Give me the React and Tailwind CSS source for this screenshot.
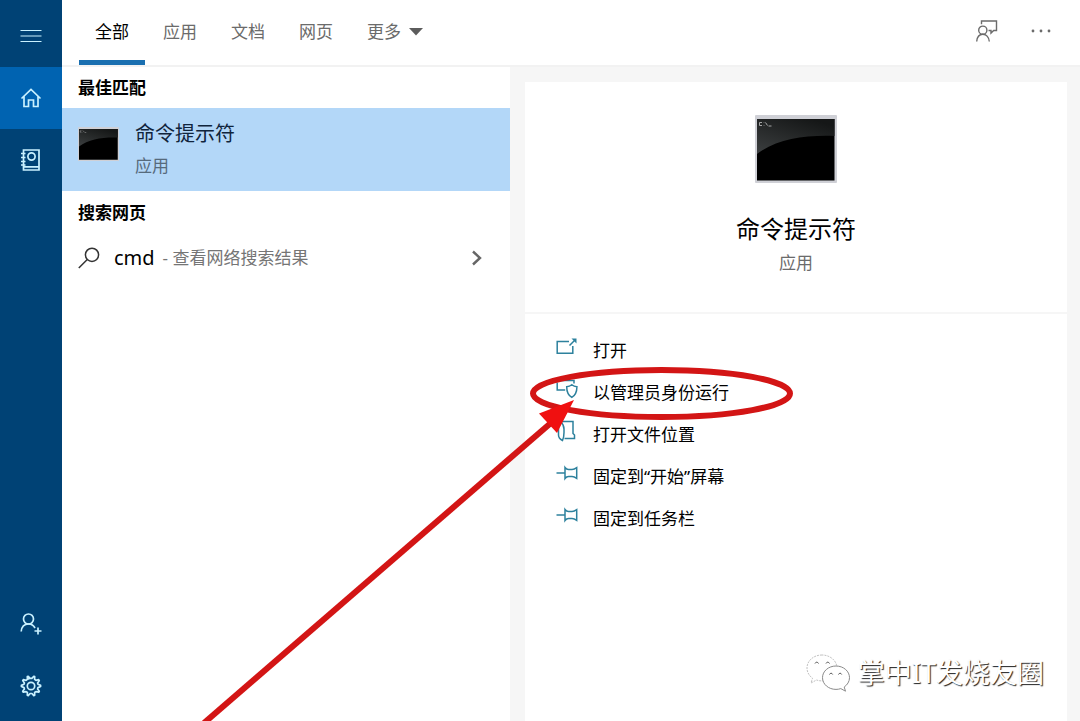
import React from 'react';

const tabs = ['全部', '应用', '文档', '网页'];

const MenuIcon = () => (
  <svg width="22" height="22" viewBox="0 0 22 22" fill="none" stroke="currentColor" strokeWidth="1.2">
    <path d="M0.5 5.500h21M0.5 11h21M0.5 16.500h21" />
  </svg>
);

const HomeIcon = () => (
  <svg width="22" height="22" viewBox="0 0 22 22" fill="none" stroke="currentColor" strokeWidth="1.7">
    <path d="M1.5 11.5 11 2.5l9.5 9M4 9.5v10h4.5v-6.5h5v6.5H18v-10" />
  </svg>
);

const NotebookIcon = () => (
  <svg width="22" height="24" viewBox="0 0 22 24" fill="none" stroke="currentColor" strokeWidth="1.7">
    <path d="M3.500 2h15.500v20H3.500zM3.500 18.800h15.500" />
    <path d="M1 5.500h4.500M1 9.500h4.500M1 13.500h4.500M1 17h4.500" strokeWidth="1.4" />
    <circle cx="11.500" cy="8.500" r="3.600" />
  </svg>
);

const AddUserIcon = () => (
  <svg width="22" height="24" viewBox="0 0 22 24" fill="none" stroke="currentColor" strokeWidth="1.7">
    <circle cx="8.5" cy="7" r="5" />
    <path d="M1.200 19.500c.4-4.500 3.200-7.500 7.300-7.500 2.900 0 5.200 1.500 6.500 4M18 15.500v7M14.500 19h7" />
  </svg>
);

const GearIcon = () => (
  <svg width="24" height="24" viewBox="0 0 24 24" fill="none" stroke="currentColor" strokeWidth="1.7" strokeLinejoin="round">
    <path d="M9.700 4.800 9.200 2.300 11.100 4.400h1.800l1.900-2.100.9 0.300-.1 2.800 1.300.9 2.800-.6.600.9-1.700 2.300.4 1.400 2.600 1.100v1.100l-2.600 1.100-.4 1.400 1.700 2.300-.6.900-2.800-.6-1.300.9.100 2.800-.9.300-1.900-2.100h-1.800l-1.900 2.100-.9-.3.100-2.800-1.300-.9-2.800.6-.6-.9 1.700-2.300-.4-1.400-2.600-1.100v-1.100l2.600-1.100.4-1.400-1.700-2.300.6-.9 2.800.6 1.300-.9-.1-2.800.9-.3z" />
    <circle cx="12" cy="12" r="3.700" />
  </svg>
);

const FeedbackIcon = () => (
  <svg width="22" height="22" viewBox="0 0 22 22" fill="none" stroke="currentColor" strokeWidth="1.400">
    <path d="M5.500 4.200V1h15v9.500h-2.800l-2.700 2.600v-2.600h-2.500" />
    <circle cx="6.800" cy="10.200" r="4.100" />
    <path d="M.7 21.500c.4-4.400 2.800-7.200 6.100-7.200s6.100 2.800 6.500 7.200" />
  </svg>
);

const SearchIcon = () => (
  <svg width="22" height="22" viewBox="0 0 22 22" fill="none" stroke="#333" strokeWidth="1.5">
    <circle cx="14" cy="7.8" r="6.6" />
    <path d="M9.300 12.500.8 21" />
  </svg>
);

const ConsoleIcon = ({ className, id }) => (
  <svg className={className} viewBox="0 0 82 68" preserveAspectRatio="none">
    <defs>
      <linearGradient id={id} x1="0" y1="1" x2="0.7" y2="0">
        <stop offset="0" stopColor="#3c3f40" />
        <stop offset="1" stopColor="#151717" />
      </linearGradient>
    </defs>
    <rect width="82" height="68" rx="1" fill="#cfd0d6" />
    <rect x="2" y="4" width="77.500" height="61.500" fill="#000" />
    <path d="M2 4h77.500v17C49 20 22 24 2 39z" fill={`url(#${id})`} />
    <path d="M7 7.500H4.500v3H7M9 7.500v.5M9 10v.5M10.500 7.500l2 3M13.500 11h3" stroke="#b5b5b5" strokeWidth="0.9" fill="none" />
  </svg>
);

const OpenIcon = () => (
  <svg width="22" height="22" viewBox="0 0 22 22" fill="none" stroke="currentColor" strokeWidth="1.5">
    <path d="M13 5.500H1.200v11.800h15.600V10M13.500 9.500l5.500-5.500" />
    <path d="M15.500 2.500h5v5z" fill="currentColor" stroke="none" />
  </svg>
);

const AdminIcon = () => (
  <svg width="22" height="22" viewBox="0 0 22 22" fill="none" stroke="currentColor" strokeWidth="1.5">
    <path d="M3.500 2.500H18v3M1.200 4.500V12h8" />
    <path d="M15.800 6.800c-1.500 1.300-3.300 1.900-5.100 1.900 0 5 1 8.300 5.100 10.700 4.100-2.400 5.100-5.700 5.100-10.700-1.800 0-3.600-.6-5.100-1.900z" />
  </svg>
);

const FileLocationIcon = () => (
  <svg width="22" height="22" viewBox="0 0 22 22" fill="none" stroke="currentColor" strokeWidth="1.5">
    <path d="M4.500 1.500h12.500v12l1.500 1.500v3.500H8.500" />
    <path d="M4.500 1.500C3 3 2.500 5 2.500 8v7c0 2.500 1 4 4 5.500 1.300-3 1.500-5 1.500-8V9c0-3.500-.8-5-3.500-7.500z" />
  </svg>
);

const PinIcon = () => (
  <svg width="22" height="22" viewBox="0 0 22 22" fill="none" stroke="currentColor" strokeWidth="1.5">
    <path d="M.5 11H9" />
    <path d="M9 5.500v11c1.200-1.500 2.300-1.900 3.500-1.900h3.500c2 0 3 .5 4.700 1.700V5.700C19 6.900 18 7.400 16 7.400h-3.500C11.300 7.400 10.200 7 9 5.500z" />
  </svg>
);

const actions = [
  { label: '打开', Icon: OpenIcon },
  { label: '以管理员身份运行', Icon: AdminIcon },
  { label: '打开文件位置', Icon: FileLocationIcon },
  { label: '固定到“开始”屏幕', Icon: PinIcon },
  { label: '固定到任务栏', Icon: PinIcon },
];

const Sidebar = () => (
  <nav className="flex w-[62px] shrink-0 flex-col bg-[#004275] pb-1 text-[#c9f1ff]">
    <button aria-label="菜单" className="flex h-[67px] items-center justify-center pt-1">
      <MenuIcon />
    </button>
    <button aria-label="主页" className="flex h-[62px] items-center justify-center bg-[#0063b1]">
      <HomeIcon />
    </button>
    <button aria-label="笔记本" className="flex h-[62px] items-center justify-center">
      <NotebookIcon />
    </button>
    <button aria-label="登录" className="mt-auto flex h-[62px] items-center justify-center">
      <AddUserIcon />
    </button>
    <button aria-label="设置" className="flex h-[62px] items-center justify-center">
      <GearIcon />
    </button>
  </nav>
);

const Header = () => (
  <header className="flex h-[67px] shrink-0 items-stretch border-b-2 border-[#f2f2f2] pl-[17px] pr-7 text-[17px] text-[#6b6b6b]">
    <div className="flex gap-0.5">
      {tabs.map((tab, i) => (
        <button
          key={tab}
          className={
            i === 0
              ? 'border-b-[5px] border-[#1a6fb0] px-4 pt-1 text-black'
              : 'border-b-[5px] border-transparent px-4 pt-1'
          }
        >
          {tab}
        </button>
      ))}
      <button className="flex items-center gap-2 border-b-[5px] border-transparent px-4 pt-1">
        更多
        <svg width="14" height="8" viewBox="0 0 14 8" fill="#5c5c5c">
          <path d="M0 0h14L7 7.500z" />
        </svg>
      </button>
    </div>
    <div className="ml-auto flex items-center gap-8 pb-1">
      <button aria-label="反馈">
        <FeedbackIcon />
      </button>
      <button aria-label="更多选项">
        <svg width="22" height="4" viewBox="0 0 22 4" fill="currentColor">
          <circle cx="3" cy="2" r="1.4" />
          <circle cx="11" cy="2" r="1.4" />
          <circle cx="19" cy="2" r="1.4" />
        </svg>
      </button>
    </div>
  </header>
);

const Results = () => (
  <section className="w-[448px] shrink-0">
    <h2 className="flex h-[41px] items-center px-4 text-[17px] font-bold">最佳匹配</h2>
    <button className="flex h-[83px] w-full items-center gap-4 bg-[#b3d7f8] px-4 text-left">
      <ConsoleIcon id="glare-small" className="mb-3 h-[34px] w-[41px]" />
      <span className="flex flex-col gap-1">
        <span className="text-xl leading-7 text-[#10243c]">命令提示符</span>
        <span className="text-[17px] leading-7 text-[#566a7c]">应用</span>
      </span>
    </button>
    <h2 className="flex h-[43px] items-center px-4 text-[17px] font-bold">搜索网页</h2>
    <button className="flex h-12 w-full items-center px-4 text-left">
      <SearchIcon />
      <span className="ml-3.5 text-xl">cmd</span>
      <span className="ml-2 text-[17px] text-[#757575]">- 查看网络搜索结果</span>
      <svg className="ml-auto mr-3" width="10" height="16" viewBox="0 0 10 16" fill="none" stroke="#666" strokeWidth="2.4">
        <path d="m1 1.500 7 6.500-7 6.500" />
      </svg>
    </button>
  </section>
);

const Watermark = () => (
  <div className="absolute bottom-7 right-9 flex items-center gap-2">
    <svg width="44" height="38" viewBox="0 0 44 38" fill="#fff" stroke="#8a8a8a" strokeWidth="1">
      <path d="M16 1C7.500 1 1 6.800 1 14c0 4.200 2.200 7.800 5.500 10.200L5 29l5.500-3c1.700.6 3.600.9 5.500.9C24.300 26.900 31 21 31 14S24.300 1 16 1z" stroke="#c2c2c2" strokeDasharray="2 1" />
      <path d="M30 12c-7.500 0-13.500 5.200-13.500 11.700S22.500 35.400 30 35.400c1.700 0 3.300-.3 4.800-.8l4.700 2.600-1.300-4.200c3.200-2.200 5.300-5.500 5.300-9.300C43.500 17.200 37.500 12 30 12z" />
      <path d="M9 9.500c.8-1.800 2.700-1.800 3.500 0M20 9.500c.8-1.800 2.700-1.800 3.500 0M23.500 20.500c.7-1.700 2.500-1.700 3.200 0M32.500 20.500c.7-1.700 2.500-1.700 3.200 0" fill="none" stroke="#555" />
    </svg>
    <span className="text-[27px] leading-10 text-white [text-shadow:1px_1px_1px_#222]">掌中IT发烧友圈</span>
  </div>
);

const Preview = () => (
  <section className="relative flex flex-1 flex-col bg-[#f6f6f6] pl-[15px] pr-[13px] pt-[15px]">
    <div className="flex h-[230px] flex-col items-center bg-white pt-[33px]">
      <ConsoleIcon id="glare-large" className="h-[68px] w-[82px]" />
      <h1 className="mt-7 text-2xl leading-9">命令提示符</h1>
      <p className="text-[17px] leading-8 text-[#6b6b6b]">应用</p>
    </div>
    <div className="flex-1 border-t-2 border-[#f6f6f6] bg-white pt-4">
      <ul>
        {actions.map(({ label, Icon }) => (
          <li key={label}>
            <button className="flex h-[42px] w-full items-center gap-[15px] px-[31px] text-left text-[17px]">
              <span className="mb-2 text-[#2d819d]">
                <Icon />
              </span>
              {label}
            </button>
          </li>
        ))}
      </ul>
    </div>
    <Watermark />
  </section>
);

// Red circle and arrow pointing at "run as administrator"
const Annotation = () => (
  <svg className="pointer-events-none absolute left-0 top-0" width="800" height="721" viewBox="0 0 800 721">
    <ellipse cx="661.5" cy="393.5" rx="128.5" ry="23.5" fill="none" stroke="#d31515" strokeWidth="6" />
    <path d="M204 723 552 422" stroke="#d31515" strokeWidth="6" />
    <path d="M574 400 539 413.500 557 433z" fill="#f01010" />
  </svg>
);

export default function App() {
  return (
    <div className="relative flex min-h-screen overflow-hidden bg-white font-['Noto_Sans','Noto_Sans_CJK_SC',sans-serif] text-black">
      <Sidebar />
      <main className="flex min-w-0 flex-1 flex-col">
        <Header />
        <div className="flex flex-1">
          <Results />
          <Preview />
        </div>
      </main>
      <Annotation />
    </div>
  );
}
